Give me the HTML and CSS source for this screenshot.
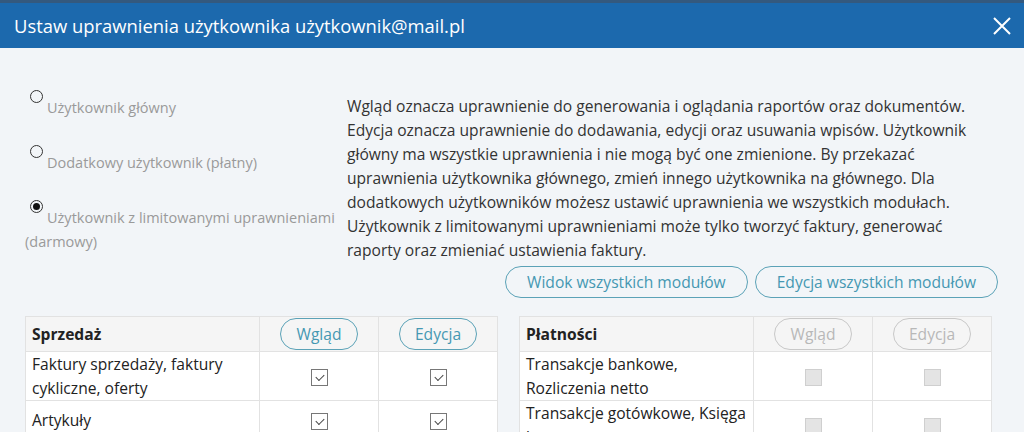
FILE: index.html
```html
<!DOCTYPE html>
<html lang="pl">
	<head>
		<meta charset="UTF-8">
		<meta name="viewport" content="width=device-width, initial-scale=1.0">
		<title>Ustaw uprawnienia</title>
		<link rel="stylesheet" href="styles.css">
	</head>
	<body>
		<div class="modal">
			<div class="modal-header">
				<h1>Ustaw uprawnienia użytkownika użytkownik@mail.pl</h1>
				<button class="close" type="button" aria-label="Zamknij">
					<svg width="18" height="18" viewBox="0 0 18 18"><path d="M1 1L17 17M17 1L1 17" stroke="#fff" stroke-width="2" fill="none"/></svg>
				</button>
			</div>
			<div class="modal-body">
				<div class="top">
					<div class="roles">
						<div class="role"><span class="radio"></span>Użytkownik główny</div>
						<div class="role"><span class="radio"></span>Dodatkowy użytkownik (płatny)</div>
						<div class="role"><span class="radio checked"></span>Użytkownik z limitowanymi uprawnieniami (darmowy)</div>
					</div>
					<div class="info">
						<p>Wgląd oznacza uprawnienie do generowania i oglądania raportów oraz dokumentów. Edycja oznacza uprawnienie do dodawania, edycji oraz usuwania wpisów. Użytkownik główny ma wszystkie uprawnienia i nie mogą być one zmienione. By przekazać uprawnienia użytkownika głównego, zmień innego użytkownika na głównego. Dla dodatkowych użytkowników możesz ustawić uprawnienia we wszystkich modułach. Użytkownik z limitowanymi uprawnieniami może tylko tworzyć faktury, generować raporty oraz zmieniać ustawienia faktury.</p>
						<div class="all-buttons">
							<button class="pill" type="button">Widok wszystkich modułów</button>
							<button class="pill" type="button">Edycja wszystkich modułów</button>
						</div>
					</div>
				</div>
				<div class="modules">
					<table class="module">
						<tr class="head">
							<th>Sprzedaż</th>
							<td><button class="pill small" type="button">Wgląd</button></td>
							<td><button class="pill small" type="button">Edycja</button></td>
						</tr>
						<tr>
							<th>Faktury sprzedaży, faktury cykliczne, oferty</th>
							<td><span class="check on"></span></td>
							<td><span class="check on"></span></td>
						</tr>
						<tr>
							<th>Artykuły</th>
							<td><span class="check on"></span></td>
							<td><span class="check on"></span></td>
						</tr>
					</table>
					<table class="module">
						<tr class="head">
							<th>Płatności</th>
							<td><button class="pill small" type="button" disabled>Wgląd</button></td>
							<td><button class="pill small" type="button" disabled>Edycja</button></td>
						</tr>
						<tr>
							<th>Transakcje bankowe, Rozliczenia netto</th>
							<td><span class="check off"></span></td>
							<td><span class="check off"></span></td>
						</tr>
						<tr>
							<th>Transakcje gotówkowe, Księga kasowa</th>
							<td><span class="check off"></span></td>
							<td><span class="check off"></span></td>
						</tr>
					</table>
				</div>
			</div>
		</div>
	</body>
</html>
```

FILE: styles.css
```css
body {
    margin: 0;
    background-color: #f2f5f8;
    font-family: "Open Sans", "Noto Sans", sans-serif;
    color: #333;
}
.modal-header {
    display: flex;
    align-items: center;
    justify-content: space-between;
    height: 45px;
    border-top: 3px solid #34597e;
    background-color: #1c69ad;
    padding: 0 13px 0 14px;
}
.modal-header h1 {
    margin: 0;
    color: white;
    font-size: 18.4px;
    font-weight: normal;
}
.close {
    background: none;
    border: none;
    padding: 0;
    display: flex;
}
.modal-body {
    padding: 42px 26px 0 25px;
}
.top {
    display: flex;
}
.roles {
    width: 322px;
    flex: none;
    font-size: 14.5px;
    line-height: 24px;
    color: #9a9a9a;
    padding-top: 6px;
}
.role {
    margin-bottom: 31px;
}
.radio {
    display: inline-block;
    box-sizing: border-box;
    width: 13px;
    height: 13px;
    border: 1px solid #333;
    border-radius: 50%;
    vertical-align: top;
    margin: -6px 4px 0 5px;
    position: relative;
}
.radio.checked::after {
    content: "";
    position: absolute;
    left: 2px;
    top: 2px;
    width: 7px;
    height: 7px;
    border-radius: 50%;
    background-color: #111;
}
.info {
    flex: 1;
}
.info p {
    margin: 4px 0 0;
    font-size: 15.6px;
    line-height: 24px;
    color: #333;
}
.all-buttons {
    display: flex;
    justify-content: flex-end;
    gap: 7px;
    margin-top: 4px;
}
.pill {
    font-family: inherit;
    font-size: 15.6px;
    height: 32px;
    padding: 0 21px;
    border: 1.5px solid #5ba2b7;
    border-radius: 16px;
    background-color: transparent;
    color: #4598b2;
}
.pill.small {
    padding: 0 15px;
    height: 32px;
}
.pill:disabled {
    border-color: #c8c8c8;
    color: #b8b8b8;
}
.modules {
    display: flex;
    align-items: flex-start;
    gap: 21px;
    margin-top: 18px;
    padding-right: 6px;
}
.module {
    flex: 1;
    border-collapse: collapse;
    background-color: white;
    font-size: 15.6px;
    line-height: 24px;
    color: #222;
}
.module tr {
    height: 38px;
}
.module th, .module td {
    border: 1px solid #e2e2e2;
    padding: 0 6px;
}
.module th {
    text-align: left;
    font-weight: normal;
}
.module td {
    width: 106px;
    text-align: center;
}
.module .head {
    background-color: #f5f5f5;
    height: 35px;
}
.module .head th {
    font-weight: bold;
}
.check {
    display: inline-block;
    box-sizing: border-box;
    width: 17px;
    height: 17px;
    vertical-align: middle;
    position: relative;
}
.check.on {
    border: 1px solid #777;
    background-color: white;
}
.check.on::after {
    content: "";
    position: absolute;
    left: 4px;
    top: 2px;
    width: 7px;
    height: 4px;
    border-left: 1px solid #444;
    border-bottom: 1px solid #444;
    transform: rotate(-45deg);
    margin-top: 2px;
}
.check.off {
    border: 1px solid #cfcfcf;
    background-color: #e4e4e4;
}
```
